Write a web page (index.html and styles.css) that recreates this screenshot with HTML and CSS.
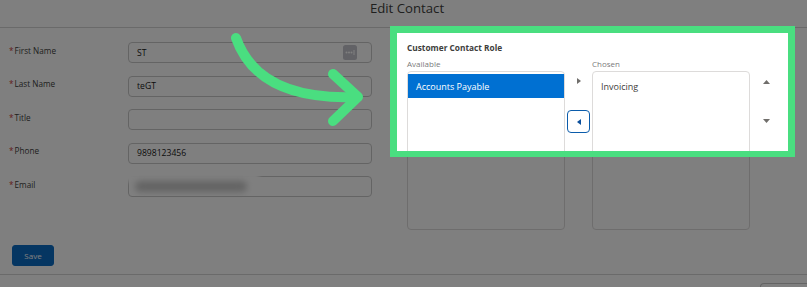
FILE: index.html
```html
<!DOCTYPE html>
<html lang="en">
<head>
<meta charset="utf-8">
<title>Edit Contact</title>
<link rel="stylesheet" href="styles.css">
</head>
<body>
<div class="modal">
  <header class="modal-header"><h2>Edit Contact</h2></header>
  <div class="modal-body">
    <form class="form">
      <div class="fields">
        <label class="label"><abbr>*</abbr>First Name</label>
        <div class="input">ST
          <svg class="pm-icon" width="14" height="15" viewBox="0 0 14 15"><rect x="0" y="0" width="14" height="15" rx="2.5" fill="#c4c4cc"/><circle cx="3.5" cy="7.5" r="1" fill="#fff"/><circle cx="6" cy="7.5" r="1" fill="#fff"/><circle cx="8.5" cy="7.5" r="1" fill="#fff"/><rect x="10.5" y="5" width="1" height="5" fill="#fff"/></svg>
        </div>
        <label class="label"><abbr>*</abbr>Last Name</label>
        <div class="input">teGT</div>
        <label class="label"><abbr>*</abbr>Title</label>
        <div class="input"></div>
        <label class="label"><abbr>*</abbr>Phone</label>
        <div class="input">9898123456</div>
        <label class="label"><abbr>*</abbr>Email</label>
        <div class="input redacted"><span class="blur-cover"></span><span class="blur-value"></span></div>
      </div>
      <div class="actions"><button type="button" class="btn-brand">Save</button></div>
    </form>
    <div class="dual">
      <div class="dual-title">Customer Contact Role</div>
      <div class="dual-row">
        <div class="group">
          <div class="group-label">Available</div>
          <div class="listbox"><div class="option selected">Accounts Payable</div></div>
        </div>
        <div class="movers">
          <button type="button" class="icon-btn"><svg width="4" height="6" viewBox="0 0 4 6"><polygon points="0,0 4,3 0,6" fill="#706e6b"/></svg></button>
          <button type="button" class="icon-btn bordered"><svg width="4" height="6" viewBox="0 0 4 6"><polygon points="4,0 0,3 4,6" fill="#0b4f9c"/></svg></button>
        </div>
        <div class="group">
          <div class="group-label">Chosen</div>
          <div class="listbox"><div class="option">Invoicing</div></div>
        </div>
        <div class="sorters">
          <button type="button" class="icon-btn"><svg width="7" height="4" viewBox="0 0 7 4"><polygon points="0,4 3.5,0 7,4" fill="#706e6b"/></svg></button>
          <button type="button" class="icon-btn"><svg width="7" height="4" viewBox="0 0 7 4"><polygon points="0,0 7,0 3.5,4" fill="#706e6b"/></svg></button>
        </div>
      </div>
    </div>
  </div>
  <footer class="modal-footer"><button type="button" class="btn-neutral"></button></footer>
</div>
<div class="spotlight"></div>
<svg class="pointer" width="807" height="287" viewBox="0 0 807 287">
  <path d="M236 38 Q258 100 354 97" fill="none" stroke="#4ade80" stroke-width="10" stroke-linecap="round"/>
  <path d="M333 74 L358 97 L333 121" fill="none" stroke="#4ade80" stroke-width="10" stroke-linecap="round" stroke-linejoin="round"/>
</svg>
</body>
</html>
```
FILE: styles.css
```css
html, body {
  margin: 0;
  padding: 0;
  overflow: hidden;
}
body {
  width: 807px;
  height: 287px;
  position: relative;
  background: #fff;
  font-family: "Open Sans", "Noto Sans", sans-serif;
  color: #3e3e3c;
}
.modal-header {
  height: 27px;
  border-bottom: 1px solid #d4d4d4;
  display: flex;
  justify-content: center;
}
.modal-header h2 {
  margin: 0 0 0 7px;
  font-size: 13.2px;
  font-weight: 400;
  line-height: 16px;
  color: #3e3e3c;
}
.modal-body {
  height: 246px;
  display: flex;
}
.form {
  width: 363px;
  padding: 14px 0 0 9px;
  margin: 0;
}
.fields {
  display: grid;
  grid-template-columns: 119px 244px;
  row-gap: 12.5px;
}
.label {
  font-size: 8.2px;
  line-height: 11px;
  padding-top: 2.5px;
  color: #3e3e3c;
}
.label abbr {
  color: #c23934;
  text-decoration: none;
  margin-right: 1px;
}
.input {
  position: relative;
  height: 21px;
  box-sizing: border-box;
  border: 1px solid #c9c9c9;
  border-radius: 4px;
  padding: 0 8px;
  display: flex;
  align-items: center;
  justify-content: space-between;
  font-size: 8.6px;
  color: #181818;
  background: #fff;
}
.pm-icon {
  margin-right: 6px;
}
.blur-cover {
  position: absolute;
  left: -4px;
  top: -4px;
  width: 134px;
  height: 9px;
  background: #fff;
  filter: blur(2px);
}
.blur-value {
  position: absolute;
  left: 6px;
  top: 4px;
  width: 112px;
  height: 11px;
  border-radius: 6px;
  background: #c8c8c8;
  filter: blur(3px);
}
.actions {
  margin-top: 45px;
  padding-left: 3px;
}
.btn-brand {
  width: 42px;
  height: 21px;
  border: 1px solid #0b6cc4;
  border-radius: 3px;
  background: #0b6cc4;
  color: #fff;
  font-family: inherit;
  font-size: 8px;
  padding: 0;
}
.dual {
  margin-left: 35px;
  padding-top: 13.5px;
}
.dual-title {
  font-size: 8.3px;
  font-weight: 700;
  line-height: 11px;
  color: #3e3e3c;
}
.dual-row {
  display: flex;
  align-items: flex-start;
}
.group-label {
  font-size: 8px;
  line-height: 11px;
  color: #7a7a7a;
  margin: 5px 0 2.5px;
}
.listbox {
  width: 158px;
  height: 159px;
  box-sizing: border-box;
  border: 1px solid #dddbda;
  border-radius: 4px;
  padding-top: 2px;
  background: #fff;
}
.option {
  height: 24px;
  display: flex;
  align-items: center;
  padding-left: 8px;
  font-size: 9px;
  color: #3e3e3c;
}
.option.selected {
  background: #0070d2;
  color: #fff;
}
.movers {
  width: 27px;
  padding-top: 17px;
  display: flex;
  flex-direction: column;
  align-items: center;
  gap: 17.5px;
}
.sorters {
  width: 28px;
  padding-top: 18px;
  margin-left: 2px;
  display: flex;
  flex-direction: column;
  align-items: center;
  gap: 16px;
}
.icon-btn {
  width: 23px;
  height: 23px;
  padding: 0;
  border: 1.5px solid transparent;
  border-radius: 4px;
  background: #fff;
  display: flex;
  align-items: center;
  justify-content: center;
  box-sizing: border-box;
}
.icon-btn.bordered {
  border-color: #0b5cab;
}
.modal-footer {
  border-top: 1px solid #d4d4d4;
  height: 12px;
  overflow: hidden;
}
.btn-neutral {
  margin: 8px 0 0 760px;
  width: 60px;
  height: 4px;
  border: 1px solid #c9c9c9;
  border-bottom: 0;
  border-radius: 4px 4px 0 0;
  background: #fff;
  display: block;
  padding: 0;
}
.spotlight {
  position: absolute;
  left: 390px;
  top: 26px;
  width: 405px;
  height: 131px;
  box-sizing: border-box;
  border: 7px solid #4ade80;
  border-bottom-width: 6px;
  box-shadow: 0 0 0 2000px rgba(0, 0, 0, 0.5);
}
.pointer {
  position: absolute;
  left: 0;
  top: 0;
  pointer-events: none;
}
```
